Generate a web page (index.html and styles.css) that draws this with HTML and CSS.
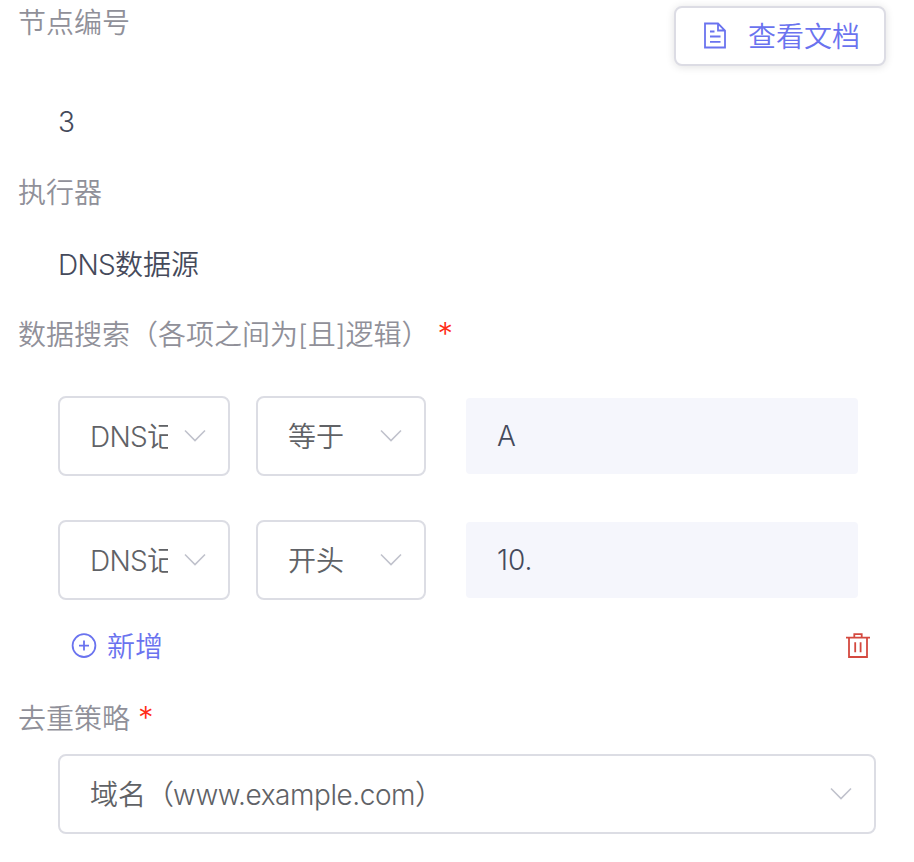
FILE: index.html
```html
<!DOCTYPE html>
<html lang="zh-CN">
<head>
<meta charset="utf-8">
<title>节点配置</title>
<link rel="stylesheet" href="styles.css">
</head>
<body>
<main class="panel">
  <header class="head">
    <div class="label">节点编号</div>
    <button class="doc-button" type="button">
      <svg class="doc-icon" width="24" height="28" viewBox="0 0 24 28"><path d="M2 1.5H15L22 8.5V25.5H2ZM15 1.5V8.5H22M7 9.5H11.5M7 14.5H17.5M7 19.8H17.5"/></svg>
      <span>查看文档</span>
    </button>
  </header>
  <div class="value number">3</div>
  <div class="label executor">执行器</div>
  <div class="value source"><span class="latin">DNS</span>数据源</div>
  <div class="label search">数据搜索（各项之间为[且]逻辑）<span class="required">*</span></div>
  <div class="filter">
    <div class="select field"><span class="text"><span class="latin">DNS</span>记录</span><svg class="arrow" width="22" height="14" viewBox="0 0 22 14"><path d="M1 1.5L11 11.5L21 1.5"/></svg></div>
    <div class="select operator"><span class="text">等于</span><svg class="arrow" width="22" height="14" viewBox="0 0 22 14"><path d="M1 1.5L11 11.5L21 1.5"/></svg></div>
    <div class="input">A</div>
  </div>
  <div class="filter second">
    <div class="select field"><span class="text"><span class="latin">DNS</span>记录</span><svg class="arrow" width="22" height="14" viewBox="0 0 22 14"><path d="M1 1.5L11 11.5L21 1.5"/></svg></div>
    <div class="select operator"><span class="text">开头</span><svg class="arrow" width="22" height="14" viewBox="0 0 22 14"><path d="M1 1.5L11 11.5L21 1.5"/></svg></div>
    <div class="input">10.</div>
  </div>
  <div class="actions">
    <div class="add">
      <svg class="plus" width="26" height="26" viewBox="0 0 26 26"><circle cx="13" cy="12.6" r="11.4"/><path d="M13 7.6V17.6M8 12.6H18"/></svg>
      <span>新增</span>
    </div>
    <svg class="trash" width="24" height="26" viewBox="0 0 24 26"><path d="M0 4.7H24M8.3 4.7V1.1H15.7V4.7M3 4.7V24H21V4.7M9.2 9.2V19.2M14.6 9.2V19.2"/></svg>
  </div>
  <div class="label strategy">去重策略<span class="required">*</span></div>
  <div class="select domain"><span class="text">域名（<span class="url">www.example.com</span>）</span><svg class="arrow" width="22" height="14" viewBox="0 0 22 14"><path d="M1 1.5L11 11.5L21 1.5"/></svg></div>
</main>
</body>
</html>
```
FILE: styles.css
```css
* {
  box-sizing: border-box;
}

body {
  margin: 0;
  background: #fff;
  font: 350 28px/42px Inter, "Noto Sans CJK SC", sans-serif;
}

.panel {
  display: flex;
  flex-direction: column;
  height: 862px;
  padding: 0 28px 0 18px;
  overflow: hidden;
}

svg {
  flex: none;
  fill: none;
}

.head {
  display: flex;
  justify-content: space-between;
  height: 102px;
  padding-top: 2px;
}

.label,
.value {
  height: 40px;
  flex: none;
  white-space: nowrap;
  color: #909099;
}

.value {
  margin-left: 40px;
  color: #454a5b;
}

.number {
  line-height: 40px;
}

.doc-button {
  display: flex;
  align-items: center;
  width: 212px;
  height: 60px;
  margin-top: 4px;
  padding: 0 0 0 27px;
  border: 2px solid #dcdce4;
  border-radius: 8px;
  background: #fff;
  box-shadow: 0 1px 8px rgba(0, 0, 0, 0.12);
  color: #6a73ef;
  font: inherit;
}

.doc-button span {
  padding-top: 2px;
}

.doc-icon {
  margin-right: 21px;
  stroke: #6a73ef;
  stroke-width: 1.8;
}

.executor,
.search {
  margin-top: 30px;
}

.source {
  margin-top: 32px;
}

.latin {
  letter-spacing: -0.7px;
}

.url {
  margin-left: -1px;
  letter-spacing: -0.45px;
}

.required {
  margin-left: 8px;
  color: #ff2c17;
  font-size: 31px;
  line-height: 0;
}

.filter {
  display: flex;
  align-items: center;
  height: 80px;
  flex: none;
  margin: 42px 0 0 40px;
}

.second {
  margin-top: 44px;
}

.select {
  display: flex;
  align-items: center;
  justify-content: space-between;
  height: 80px;
  flex: none;
  padding: 0 22px 0 30px;
  border: 2px solid #dcdde4;
  border-radius: 8px;
  color: #606266;
}

.text {
  height: 40px;
  overflow: hidden;
  white-space: nowrap;
}

.field {
  width: 172px;
  margin-right: 26px;
}

.field .text {
  width: 78px;
}

.operator {
  width: 170px;
  margin-right: 40px;
}

.arrow {
  stroke: #c0c2cc;
  stroke-width: 1.6;
}

.input {
  width: 392px;
  height: 76px;
  padding: 18px 31px;
  border-radius: 4px;
  background: #f5f6fc;
  color: #454a5b;
  line-height: 40px;
}

.actions {
  display: flex;
  align-items: center;
  justify-content: space-between;
  height: 40px;
  flex: none;
  margin: 26px 16px 0 53px;
}

.add {
  display: flex;
  align-items: center;
  gap: 10px;
  height: 40px;
  color: #6a73ef;
}

.add span {
  padding-top: 2px;
}

.plus {
  stroke: #6a73ef;
  stroke-width: 1.8;
}

.trash {
  stroke: #d4493f;
  stroke-width: 1.8;
}

.strategy {
  margin-top: 32px;
}

.domain {
  width: 818px;
  margin: 16px 0 0 40px;
}
```
